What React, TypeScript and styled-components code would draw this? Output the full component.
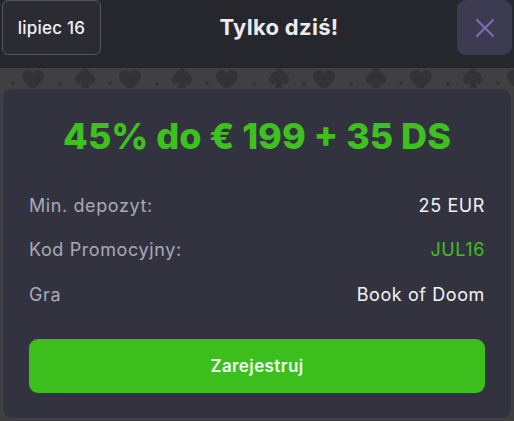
import React from 'react';
import styled, { createGlobalStyle } from 'styled-components';

const GlobalStyle = createGlobalStyle`
  html, body {
    margin: 0;
    padding: 0;
    background: #26272c;
    font-family: Inter, "Noto Sans", sans-serif;
  }
`;

const Page = styled.div`
  width: 514px;
  height: 421px;
  overflow: hidden;
  background: #3f3f40;
`;

const Header = styled.header`
  display: flex;
  align-items: flex-start;
  height: 68px;
  padding: 0 2px;
  box-sizing: border-box;
  background: #26272c;
`;

const DateBadge = styled.div`
  width: 99px;
  height: 55px;
  box-sizing: border-box;
  display: flex;
  align-items: center;
  justify-content: center;
  border: 1px solid #55565d;
  border-radius: 6px;
  background: #2b2b33;
  color: #f2f2f4;
  font-size: 17px;
  font-weight: 500;
  letter-spacing: 0.2px;
`;

const Title = styled.h1`
  flex: 1;
  margin: 0;
  line-height: 55px;
  text-align: center;
  color: #ececee;
  font-size: 22px;
  font-weight: 700;
  letter-spacing: 0.3px;
`;

const CloseButton = styled.button`
  width: 55px;
  height: 55px;
  padding: 0;
  border: none;
  border-radius: 9px;
  background: #3d3b51;
  display: flex;
  align-items: center;
  justify-content: center;
`;

const Strip = styled.svg`
  display: block;
  width: 514px;
  height: 20px;
`;

const Card = styled.section`
  margin: 0 2px;
  height: 331px;
  box-sizing: border-box;
  padding: 0 26px;
  border: 1px solid #42424e;
  border-radius: 10px;
  background: #33333f;
  display: flex;
  flex-direction: column;
`;

const Headline = styled.h2`
  margin: 27px 0 0;
  height: 40px;
  line-height: 40px;
  text-align: center;
  color: #3ec01e;
  font-size: 36px;
  font-weight: 800;
`;

const Rows = styled.div`
  display: flex;
  flex-direction: column;
  margin-top: 27px;
`;

const Row = styled.div`
  display: flex;
  justify-content: space-between;
  align-items: center;
  height: 44.5px;
  font-size: 18px;
  letter-spacing: 0.6px;
`;

const Label = styled.span`
  color: #a9a9b8;
`;

const Value = styled.span<{ $accent?: boolean }>`
  color: ${p => (p.$accent ? '#3ec01e' : '#f4f4f6')};
`;

const Register = styled.button`
  margin-top: 22px;
  height: 54px;
  border: none;
  border-radius: 9px;
  background: #3cbf1c;
  color: #f4fff0;
  font-family: inherit;
  font-size: 17px;
  font-weight: 600;
  letter-spacing: 0.4px;
`;

const rows = [
  { label: 'Min. depozyt:', value: '25 EUR' },
  { label: 'Kod Promocyjny:', value: 'JUL16', accent: true },
  { label: 'Gra', value: 'Book of Doom' },
];

const heart = 'M0 16 C-4 12 -11 8 -11 2 C-11 -2 -8 -4 -5 -4 C-2 -4 0 -2 0 0 C0 -2 2 -4 5 -4 C8 -4 11 -2 11 2 C11 8 4 12 0 16Z';
const spade = 'M0 0 C4 5 10 8 10 13 C10 17 6 18 3 16 L4 21 L-4 21 L-3 16 C-6 18 -10 17 -10 13 C-10 8 -4 5 0 0Z';

const SuitStrip: React.FC = () => (
  <Strip viewBox="0 0 514 20">
    <defs>
      <pattern id="suits" x="0" y="0" width="97" height="20" patternUnits="userSpaceOnUse">
        <rect width="97" height="20" fill="#404041" />
        <path d={heart} transform="translate(33 6)" fill="#333335" />
        <path d={spade} transform="translate(85 -1)" fill="#333335" />
        <circle cx="13" cy="15" r="2" fill="#333335" />
        <circle cx="60" cy="16" r="2" fill="#333335" />
      </pattern>
    </defs>
    <rect width="514" height="20" fill="url(#suits)" />
  </Strip>
);

const App: React.FC = () => {
  return (
    <>
      <GlobalStyle />
      <Page>
        <Header>
          <DateBadge>lipiec 16</DateBadge>
          <Title>Tylko dziś!</Title>
          <CloseButton aria-label="Zamknij">
            <svg width="22" height="22" viewBox="0 0 22 22">
              <path d="M3 3 L19 19 M19 3 L3 19" stroke="#806ab6" strokeWidth="2.2" strokeLinecap="round" />
            </svg>
          </CloseButton>
        </Header>
        <SuitStrip />
        <Card>
          <Headline>45% do € 199 + 35 DS</Headline>
          <Rows>
            {rows.map(r => (
              <Row key={r.label}>
                <Label>{r.label}</Label>
                <Value $accent={r.accent}>{r.value}</Value>
              </Row>
            ))}
          </Rows>
          <Register>Zarejestruj</Register>
        </Card>
      </Page>
    </>
  );
};

export default App;
